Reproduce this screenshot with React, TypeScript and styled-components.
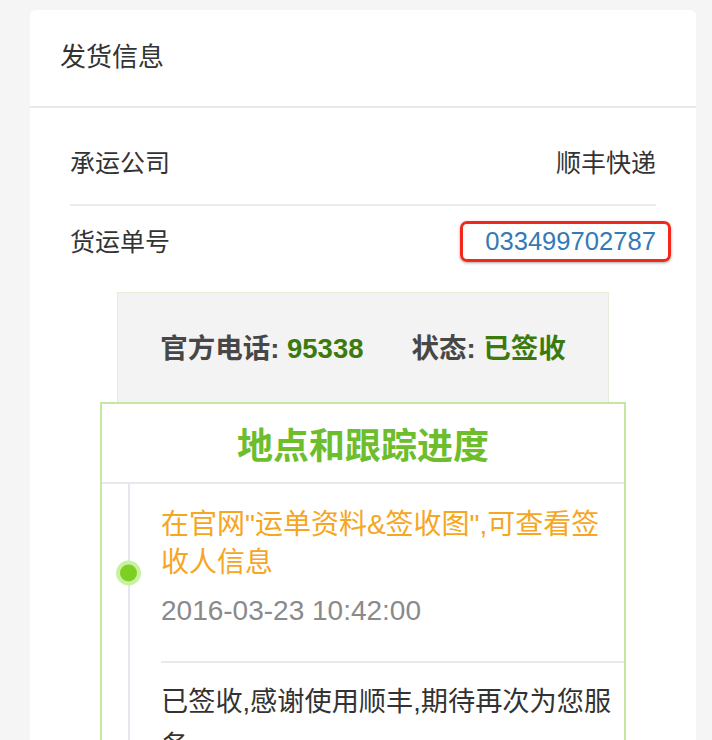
import * as React from "react";
import styled, { createGlobalStyle } from "styled-components";

const FONT = `"Liberation Sans", "Noto Sans CJK SC", sans-serif`;

const GlobalStyle = createGlobalStyle`
  html, body {
    margin: 0;
    padding: 0;
    background: #f5f5f5;
    font-family: ${FONT};
    color: #333;
  }
`;

type Track = {
  text: string;
  time?: string;
  highlight?: boolean;
};

const TRACKS: Track[] = [
  {
    text: '在官网"运单资料&签收图",可查看签收人信息',
    time: "2016-03-23 10:42:00",
    highlight: true,
  },
  {
    text: "已签收,感谢使用顺丰,期待再次为您服务",
    time: "2016-03-23 10:41:00",
  },
];

const App: React.FC = () => {
  return (
    <>
      <GlobalStyle />
      <Page>
        <Card>
          <CardHeader>发货信息</CardHeader>
          <CardBody>
            <InfoRow>
              <Label>承运公司</Label>
              <Value>顺丰快递</Value>
            </InfoRow>
            <InfoRow $last>
              <Label>货运单号</Label>
              <TrackingNo>033499702787</TrackingNo>
            </InfoRow>

            <StatusBox>
              <StatusItem>
                官方电话: <StatusValue>95338</StatusValue>
              </StatusItem>
              <StatusItem>
                状态: <StatusValue>已签收</StatusValue>
              </StatusItem>
            </StatusBox>

            <TrackPanel>
              <TrackTitle>地点和跟踪进度</TrackTitle>
              <Timeline>
                {TRACKS.map((t, i) => (
                  <Entry key={i} $highlight={t.highlight}>
                    {t.highlight && <Dot />}
                    <EntryText $highlight={t.highlight}>{t.text}</EntryText>
                    {t.time && <EntryTime>{t.time}</EntryTime>}
                  </Entry>
                ))}
              </Timeline>
            </TrackPanel>
          </CardBody>
        </Card>
      </Page>
    </>
  );
};

const Page = styled.div`
  padding: 10px 16px 30px 30px;
`;

const Card = styled.div`
  width: 666px;
  background: #fff;
  border-radius: 6px;
`;

const CardHeader = styled.div`
  height: 98px;
  padding: 0 0 8px 30px;
  box-sizing: border-box;
  display: flex;
  align-items: center;
  font-size: 26px;
  color: #333;
  border-bottom: 2px solid #e9e9ec;
`;

const CardBody = styled.div`
  padding: 0 40px 30px;
`;

const InfoRow = styled.div<{ $last?: boolean }>`
  display: flex;
  justify-content: space-between;
  align-items: center;
  line-height: 40px;
  padding: ${(p) => (p.$last ? "15px 0 30px" : "35px 0 21px")};
  border-bottom: ${(p) => (p.$last ? "none" : "2px solid #ececf0")};
`;

const Label = styled.span`
  font-size: 25px;
  color: #333;
`;

const Value = styled.span`
  font-size: 25px;
  color: #333;
`;

const TrackingNo = styled.span`
  display: inline-block;
  font-size: 25.6px;
  color: #337ab7;
  line-height: 35px;
  padding: 0 12px 0 22px;
  margin-right: -15px;
  border: 3px solid #f2281c;
  border-radius: 7px;
  box-shadow: 0 1px 3px rgba(0, 0, 0, 0.35);
`;

const StatusBox = styled.div`
  margin: 0 47px;
  height: 110px;
  box-sizing: border-box;
  padding-bottom: 3px;
  background: #f3f3f3;
  border: 1px solid #e4eed8;
  border-bottom: none;
  display: flex;
  justify-content: center;
  align-items: center;
  gap: 48px;
  font-size: 27.5px;
  font-weight: 700;
  color: #474747;
`;

const StatusItem = styled.span`
  white-space: nowrap;
`;

const StatusValue = styled.span`
  color: #3d7a0e;
`;

const TrackPanel = styled.div`
  margin: 0 30px;
  border: 2px solid #c6e7a2;
  background: #fff;
`;

const TrackTitle = styled.div`
  height: 78px;
  display: flex;
  justify-content: center;
  align-items: center;
  font-size: 36px;
  font-weight: 700;
  color: #6dbd2c;
  border-bottom: 2px solid #e8e8ee;
`;

const Timeline = styled.div`
  margin-left: 26px;
  padding-left: 31px;
  border-left: 2px solid #e6e6ee;
`;

const Entry = styled.div<{ $highlight?: boolean }>`
  position: relative;
  padding: ${(p) => (p.$highlight ? "22px 0 31px" : "17px 0 31px")};
  border-bottom: 2px solid #e8e8ee;
`;

const Dot = styled.span`
  position: absolute;
  left: -45px;
  top: 50%;
  transform: translateY(-50%);
  width: 17px;
  height: 17px;
  border-radius: 50%;
  background: #7dcf24;
  border: 4.5px solid #c9f1a2;
`;

const EntryText = styled.div<{ $highlight?: boolean }>`
  font-size: ${(p) => (p.$highlight ? "28px" : "27.2px")};
  line-height: ${(p) => (p.$highlight ? "38px" : "44px")};
  color: ${(p) => (p.$highlight ? "#f5a623" : "#333")};
`;

const EntryTime = styled.div`
  margin-top: 10px;
  font-size: 28px;
  line-height: 38px;
  color: #8a8a8a;
`;

export default App;
